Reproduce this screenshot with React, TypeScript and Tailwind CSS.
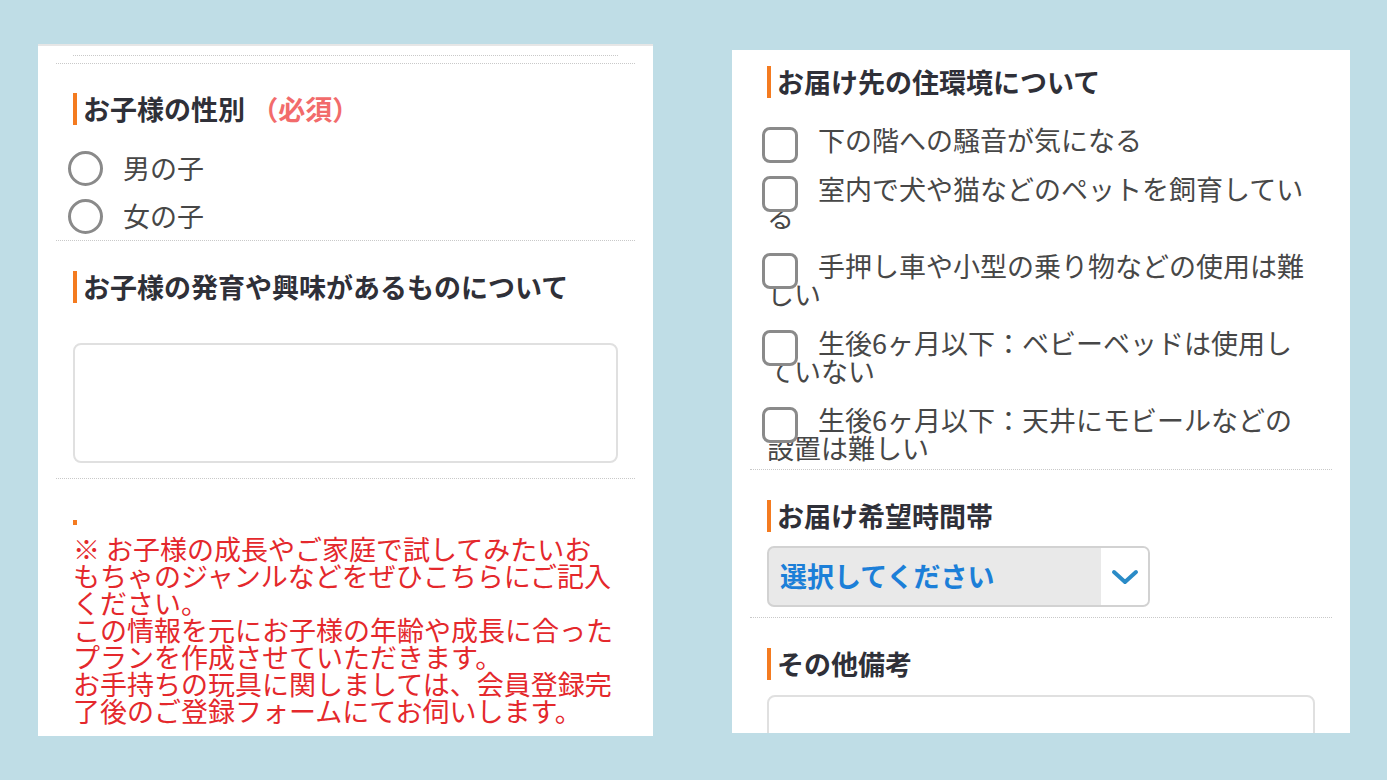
const FONT = "font-['Noto_Sans_CJK_JP',sans-serif]";

function Heading({ children }: { children: React.ReactNode }) {
  return (
    <div className="flex h-[32px] items-center">
      <span className="h-[32px] w-[4px] shrink-0 bg-[#f47b20]" />
      <span className="ml-[6px] text-[27px] font-bold leading-[32px] text-[#2f3038]">
        {children}
      </span>
    </div>
  );
}

function Radio({ label }: { label: string }) {
  return (
    <div className="flex h-[48px] items-center">
      <span className="-ml-[5px] h-[35px] w-[35px] shrink-0 rounded-full border-[3px] border-[#8a8a8a] bg-white" />
      <span className="ml-[20px] text-[27px] leading-[28px] text-[#474747]">{label}</span>
    </div>
  );
}

function Check({ first, rest }: { first: string; rest?: string }) {
  return (
    <div className="text-[27px] leading-[28px] text-[#474747]">
      <span className="relative top-[1px] -my-[8px] -ml-[5px] mr-[20px] inline-block h-[36px] w-[36px] rounded-[8px] border-[3px] border-[#8a8a8a] bg-white align-middle" />
      {first}
      {rest ? (
        <>
          <br />
          {rest}
        </>
      ) : null}
    </div>
  );
}

const CHECKS = [
  { first: "下の階への騒音が気になる" },
  { first: "室内で犬や猫などのペットを飼育してい", rest: "る" },
  { first: "手押し車や小型の乗り物などの使用は難", rest: "しい" },
  { first: "生後6ヶ月以下：ベビーベッドは使用し", rest: "ていない" },
  { first: "生後6ヶ月以下：天井にモビールなどの", rest: "設置は難しい" },
];

const NOTE = [
  "※ お子様の成長やご家庭で試してみたいお",
  "もちゃのジャンルなどをぜひこちらにご記入",
  "ください。",
  "この情報を元にお子様の年齢や成長に合った",
  "プランを作成させていただきます。",
  "お手持ちの玩具に関しましては、会員登録完",
  "了後のご登録フォームにてお伺いします。",
];

export default function App() {
  return (
    <div className={`flex h-[780px] w-[1387px] items-start gap-[79px] bg-[#bfdde6] pl-[38px] ${FONT}`}>
      {/* left card */}
      <div className="mt-[44px] h-[692px] w-[615px] overflow-hidden bg-white">
        <div className="h-[2px] bg-[#e6e6e6]" />
        <div className="px-[18px]">
          <div className="mx-[17px] mt-[9px] border-t border-dotted border-[#c9c9c9]" />
          <div className="mt-[7px] border-t border-dotted border-[#c9c9c9]" />

          <section className="border-b border-dotted border-[#c9c9c9] px-[17px] pt-[29px]">
            <Heading>
              お子様の性別 <span className="text-[#f26b6b]">（必須）</span>
            </Heading>
            <div className="mt-[19px]">
              <Radio label="男の子" />
              <Radio label="女の子" />
            </div>
          </section>

          <section className="border-b border-dotted border-[#c9c9c9] px-[17px] pt-[30px] pb-[15px]">
            <Heading>お子様の発育や興味があるものについて</Heading>
            <div className="mt-[40px] h-[120px] rounded-[8px] border-2 border-[#e0e0e0]" />
          </section>

          <section className="px-[17px] pt-[41px]">
            <div className="h-[5px] w-[4px] bg-[#f47b20]" />
            <p className="mt-[10px] text-[27px] leading-[27px] text-[#e4282c]">
              {NOTE.map((l, i) => (
                <span key={i} className="block whitespace-nowrap">
                  {l}
                </span>
              ))}
            </p>
          </section>
        </div>
      </div>

      {/* right card */}
      <div className="mt-[50px] h-[683px] w-[618px] overflow-hidden bg-white">
        <div className="px-[18px]">
          <section className="border-b border-dotted border-[#c9c9c9] px-[17px] pt-[16px] pb-[7px]">
            <Heading>お届け先の住環境について</Heading>
            <div className="mt-[28px] flex flex-col gap-[21px]">
              {CHECKS.map((c) => (
                <Check key={c.first} first={c.first} rest={c.rest} />
              ))}
            </div>
          </section>

          <section className="border-b border-dotted border-[#c9c9c9] px-[17px] pt-[30px] pb-[10px]">
            <Heading>お届け希望時間帯</Heading>
            <div className="mt-[14px] flex h-[61px] w-[383px] overflow-hidden rounded-[7px] border-2 border-[#d2d2d2] bg-[#e9e9e9]">
              <div className="flex flex-1 items-center pl-[11px] text-[27px] font-bold text-[#1c7fd8]">
                選択してください
              </div>
              <div className="flex w-[47px] items-center justify-center bg-white">
                <svg width="28" height="18" viewBox="0 0 28 18" fill="none">
                  <polyline
                    points="3,4 14,14 25,4"
                    stroke="#2a8bc7"
                    strokeWidth="4"
                    strokeLinecap="round"
                    strokeLinejoin="round"
                  />
                </svg>
              </div>
            </div>
          </section>

          <section className="px-[17px] pt-[30px]">
            <Heading>その他備考</Heading>
            <div className="mt-[15px] h-[120px] rounded-[8px] border-2 border-[#e0e0e0]" />
          </section>
        </div>
      </div>
    </div>
  );
}
